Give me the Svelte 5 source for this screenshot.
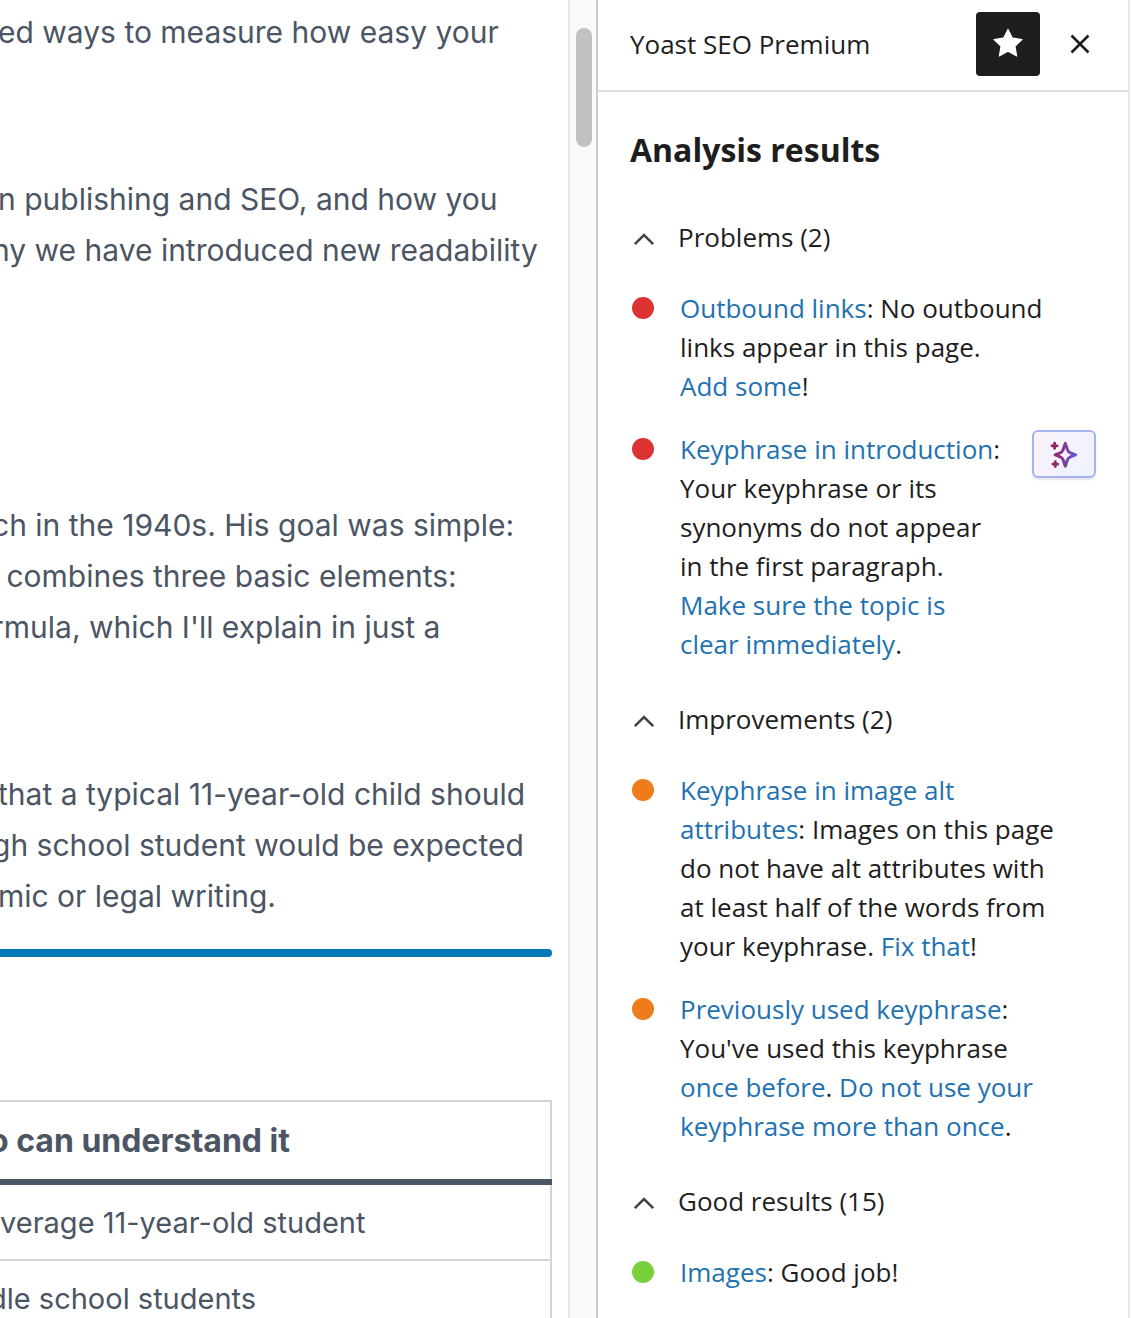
<script lang="ts">
  type Part = { text: string; href?: string };
  type Result = { id: string; parts: Part[]; fixable?: boolean };
  type Group = { id: string; title: string; score: 'bad' | 'ok' | 'good'; results: Result[] };
  type Line = { text: string; cut?: boolean };

  const sections: Line[][][] = [
    [
      [{ text: 'ed ways to measure how easy your' }],
      [
        { text: 'n publishing and SEO, and how you' },
        { text: 'hy we have introduced new readability', cut: true },
      ],
    ],
    [
      [
        { text: 'ch in the 1940s. His goal was simple:', cut: true },
        { text: ' combines three basic elements:' },
        { text: "rmula, which I'll explain in just a", cut: true },
      ],
      [
        { text: 'that a typical 11-year-old child should' },
        { text: 'gh school student would be expected', cut: true },
        { text: 'mic or legal writing.' },
      ],
    ],
  ];

  const groups: Group[] = [
    {
      id: 'problems',
      title: 'Problems',
      score: 'bad',
      results: [
        {
          id: 'outbound',
          parts: [
            { text: 'Outbound links', href: '#outbound' },
            { text: ': No outbound links appear in this page. ' },
            { text: 'Add\u00a0some', href: '#add' },
            { text: '!' },
          ],
        },
        {
          id: 'introduction',
          fixable: true,
          parts: [
            { text: 'Keyphrase in introduction', href: '#introduction' },
            { text: ': Your keyphrase or its synonyms do not appear in the first paragraph. ' },
            { text: 'Make sure the topic is clear immediately', href: '#topic' },
            { text: '.' },
          ],
        },
      ],
    },
    {
      id: 'improvements',
      title: 'Improvements',
      score: 'ok',
      results: [
        {
          id: 'alt',
          parts: [
            { text: 'Keyphrase in image alt attributes', href: '#alt' },
            { text: ': Images on this page do not have alt attributes with at least half of the words from your keyphrase. ' },
            { text: 'Fix that', href: '#fix' },
            { text: '!' },
          ],
        },
        {
          id: 'previous',
          parts: [
            { text: 'Previously used keyphrase', href: '#previous' },
            { text: ": You've used this keyphrase " },
            { text: 'once before', href: '#once' },
            { text: '. ' },
            { text: 'Do not use your keyphrase more than once', href: '#reuse' },
            { text: '.' },
          ],
        },
      ],
    },
    {
      id: 'good',
      title: 'Good results',
      score: 'good',
      results: [
        {
          id: 'images',
          parts: [{ text: 'Images', href: '#images' }, { text: ': Good job!' }],
        },
      ],
    },
  ];

  const counts: Record<string, number> = { problems: 2, improvements: 2, good: 15 };

  let open: Record<string, boolean> = $state({ problems: true, improvements: true, good: true });
  let pinned = $state(true);
</script>

<div class="editor">
  <main class="content">
    {#each sections as section}
      <section>
        {#each section as paragraph}
          <p>
            {#each paragraph as line}
              <span class="line" class:cut={line.cut}>{line.text}</span>
            {/each}
          </p>
        {/each}
      </section>
    {/each}

    <hr />

    <table>
      <thead>
        <tr><th scope="col" class="cut">o can understand it</th></tr>
      </thead>
      <tbody>
        <tr><td>verage 11-year-old student</td></tr>
        <tr><td class="cut">dle school students</td></tr>
      </tbody>
    </table>
  </main>

  <div class="scrollbar" aria-hidden="true"><div class="thumb"></div></div>

  <aside class="sidebar">
    <header>
      <span class="name">Yoast SEO Premium</span>
      <button
        type="button"
        class="btn-pin"
        aria-label="Unpin from toolbar"
        aria-pressed={pinned}
        onclick={() => (pinned = !pinned)}
      >
        <svg width="48" height="48" viewBox="0 0 24 24" fill="currentColor">
          <path d="M11.776 4.454a.25.25 0 01.448 0l2.069 4.192a.25.25 0 00.188.137l4.626.672a.25.25 0 01.139.426l-3.348 3.263a.25.25 0 00-.072.222l.79 4.607a.25.25 0 01-.362.263l-4.138-2.175a.25.25 0 00-.232 0l-4.138 2.175a.25.25 0 01-.363-.263l.79-4.607a.25.25 0 00-.071-.222L4.754 9.881a.25.25 0 01.139-.426l4.626-.672a.25.25 0 00.188-.137l2.069-4.192z" />
        </svg>
      </button>
      <button type="button" class="btn-close" aria-label="Close plugin">
        <svg width="20" height="20" viewBox="0 0 20 20" fill="none" stroke="currentColor" stroke-width="2.6">
          <path d="M1.5 1.5l17 17M18.5 1.5l-17 17" />
        </svg>
      </button>
    </header>

    <div class="analysis">
      <h2>Analysis results</h2>

      {#each groups as group (group.id)}
        <section class="group">
          <h3>
            <button
              type="button"
              class="toggle"
              aria-expanded={open[group.id]}
              onclick={() => (open[group.id] = !open[group.id])}
            >
              <svg
                class:closed={!open[group.id]}
                width="24"
                height="20"
                viewBox="0 0 24 20"
                fill="none"
                stroke="currentColor"
                stroke-width="2.6"
              >
                <path d="M2.8 16.2L12 7l9.2 9.2" />
              </svg>
              {group.title} ({counts[group.id]})
            </button>
          </h3>
          {#if open[group.id]}
            <ul>
              {#each group.results as result (result.id)}
                <li class:plain={!result.fixable}>
                  <span class="dot {group.score}"></span>
                  <p>
                    {#each result.parts as part}{#if part.href}<a href={part.href}>{part.text}</a>{:else}{part.text}{/if}{/each}
                  </p>
                  {#if result.fixable}
                    <button type="button" class="btn-ai" aria-label="Optimize with AI">
                      <svg width="30" height="30" viewBox="0 0 30 30" fill="none" stroke="url(#ai-stroke)" stroke-width="3" stroke-linecap="round" stroke-linejoin="round">
                        <defs>
                          <linearGradient id="ai-stroke" gradientUnits="userSpaceOnUse" x1="2" y1="13" x2="28" y2="17">
                            <stop offset="0" stop-color="#8f1f5f" />
                            <stop offset="0.25" stop-color="#922a6e" />
                            <stop offset="1" stop-color="#5d5fe0" />
                          </linearGradient>
                        </defs>
                        <path d="M16.3 4.4L18.6 11Q19.4 13 21.4 13.8L26.6 15.8L21.4 17.8Q19.4 18.6 18.6 20.6L16.3 27.2L14 20.6Q13.2 18.6 11.2 17.8L6.2 15.8L11.2 13.8Q13.2 13 14 11Z" />
                        <path stroke-width="2.8" d="M5.6 4.2v5.2M3 6.8h5.2M6.3 22.6v5M3.8 25.1h5" />
                      </svg>
                    </button>
                  {/if}
                </li>
              {/each}
            </ul>
          {/if}
        </section>
      {/each}
    </div>
  </aside>
</div>

<style>
  :global(body) {
    background: #fff;
  }

  .editor {
    display: flex;
    height: 100vh;
    overflow: hidden;
  }

  .content {
    flex: 1;
    min-width: 0;
    padding: 7px 16px 0 0;
    overflow: hidden;
    color: #4b5563;
    font-family: Inter, sans-serif;
    font-size: 30px;
    line-height: 51px;
  }

  .content section {
    display: flex;
    flex-direction: column;
    gap: 116px;
    margin-bottom: 224px;
  }

  .content section:nth-of-type(2) {
    margin-bottom: 27px;
  }

  .content p {
    margin: 0;
  }

  .line {
    display: block;
    white-space: pre;
    text-indent: -2px;
  }

  .line.cut {
    text-indent: -8px;
  }

  hr {
    height: 8px;
    margin: 0 0 143px;
    border: 0;
    border-radius: 0 4px 4px 0;
    background: #0077b6;
  }

  table {
    width: 100%;
    border-collapse: separate;
    border-spacing: 0;
    border-top: 2px solid #d1d5d8;
    font-size: 29px;
    line-height: 50px;
  }

  th,
  td {
    padding: 13px 0 11px;
    border-right: 2px solid #d1d5d8;
    border-bottom: 2px solid #d1d5d8;
    text-align: left;
    white-space: nowrap;
  }

  th {
    padding: 14px 0 13px;
    border-bottom: 0;
    font-size: 32px;
    font-weight: 700;
  }

  thead {
    box-shadow: 0 6px 0 #4b5563;
  }

  tbody::before {
    content: '';
    display: table-row;
    height: 6px;
  }

  th.cut,
  td.cut {
    text-indent: -11px;
  }

  .scrollbar {
    flex: none;
    box-sizing: border-box;
    width: 28px;
    padding: 28px 4px 0 6px;
    border-left: 2px solid #e8e8e8;
    background: #fafafa;
  }

  .thumb {
    height: 119px;
    border-radius: 8px;
    background: #c1c1c1;
  }

  .sidebar {
    flex: none;
    box-sizing: border-box;
    width: 534px;
    margin-right: 2px;
    border-left: 2px solid #ccc;
    border-right: 2px solid #e8e8e8;
    overflow: hidden;
    color: #1e1e1e;
    font-family: 'Open Sans', sans-serif;
    font-size: 26px;
    line-height: 39px;
  }

  header {
    display: flex;
    align-items: center;
    gap: 8px;
    padding: 12px 16px 14px 32px;
    border-bottom: 2px solid #ddd;
  }

  .name {
    flex: 1;
  }

  button {
    padding: 0;
    border: 0;
    background: none;
    color: inherit;
    font: inherit;
    cursor: pointer;
  }

  .btn-pin,
  .btn-close {
    display: flex;
    align-items: center;
    justify-content: center;
    width: 64px;
    height: 64px;
    border-radius: 4px;
  }

  .btn-pin {
    background: #1e1e1e;
    color: #fff;
  }

  .analysis {
    padding: 38px 32px 0;
  }

  h2 {
    margin: 0 0 49px;
    font-size: 32px;
    font-weight: 700;
    line-height: 39px;
  }

  h3 {
    margin: 0 0 32px;
    font-size: 26px;
    font-weight: 400;
  }

  .group {
    margin-bottom: 36px;
  }

  .toggle {
    display: flex;
    align-items: center;
    gap: 22px;
    width: 100%;
    padding-left: 2px;
    text-align: left;
  }

  .toggle svg {
    flex: none;
    color: #444;
  }

  .toggle svg.closed {
    transform: rotate(180deg);
  }

  ul {
    display: flex;
    flex-direction: column;
    gap: 24px;
    margin: 0;
    padding: 0;
    list-style: none;
  }

  li {
    display: flex;
    align-items: flex-start;
    padding-left: 2px;
  }

  li.plain {
    padding-right: 36px;
  }

  li p {
    flex: 1;
    margin: 0;
  }

  .dot {
    flex: none;
    width: 22px;
    height: 22px;
    margin: 8px 26px 0 0;
    border-radius: 50%;
  }

  .dot.bad {
    background: #dc3232;
  }

  .dot.ok {
    background: #ee7c1b;
  }

  .dot.good {
    background: #7ad03a;
  }

  a {
    color: #2271b1;
    text-decoration: none;
  }

  a:hover {
    text-decoration: underline;
  }

  .btn-ai {
    display: flex;
    flex: none;
    align-items: center;
    justify-content: center;
    box-sizing: border-box;
    width: 64px;
    height: 48px;
    margin-left: 28px;
    border: 2px solid #a5b4f0;
    border-radius: 6px;
    background: linear-gradient(135deg, #faf3f9, #eef2ff);
    box-shadow: 0 2px 2px rgba(0, 0, 0, 0.1);
  }

  button:focus-visible,
  a:focus-visible {
    outline: 2px solid #2271b1;
    outline-offset: 2px;
  }
</style>
